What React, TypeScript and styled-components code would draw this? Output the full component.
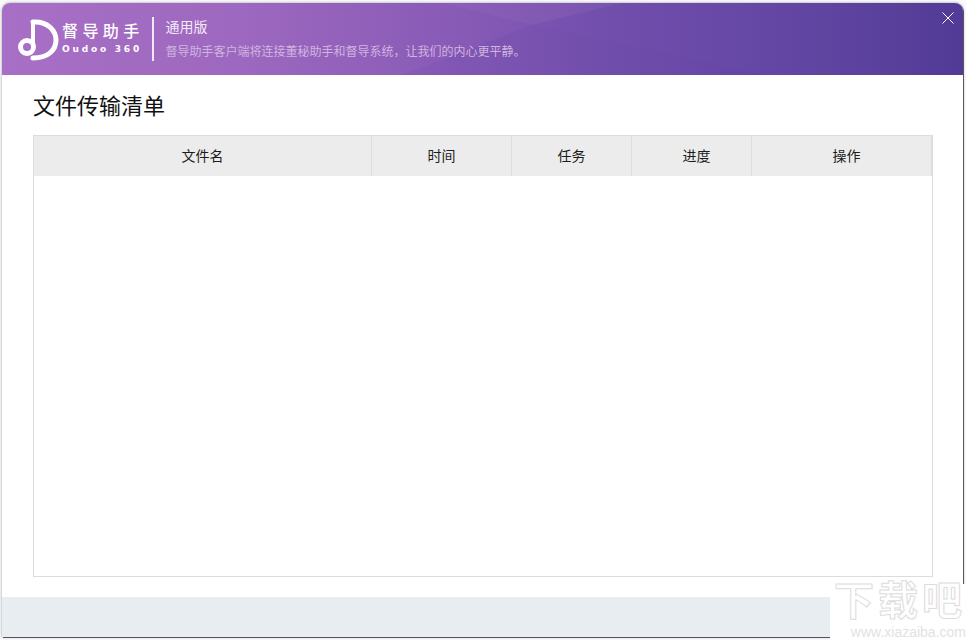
import { createGlobalStyle } from "styled-components";
import styled from "styled-components";

const GlobalStyle = createGlobalStyle`
    html, body {
        margin: 0;
        padding: 0;
        height: 640px;
        overflow: hidden;
        background: #fafafb;
        font-family: "Noto Sans CJK SC", "Liberation Sans", sans-serif;
    }
`;

const columns = [
    { label: "文件名", width: 338, shift: 0 },
    { label: "时间", width: 140, shift: 0 },
    { label: "任务", width: 120, shift: 0 },
    { label: "进度", width: 120, shift: 10 },
    { label: "操作", width: 180, shift: 10 },
];

export default function App() {
    return (
        <Page>
            <GlobalStyle />
            <Window>
                <Header>
                    <HeaderArt viewBox="0 0 961 72" preserveAspectRatio="none" aria-hidden="true">
                        <polygon points="440,0 620,0 530,22" fill="#ffffff" opacity="0.03" />
                        <polygon points="530,22 760,72 400,72" fill="#3d2a90" opacity="0.07" />
                        <polygon points="620,0 961,0 961,72 760,72 530,22" fill="#3d2a90" opacity="0.04" />
                    </HeaderArt>
                    <Brand>
                        <LogoMark viewBox="0 0 42 44" aria-hidden="true">
                            <path d="M15 4 C30 3 38 13 38 22 C38 33 29 40 15 40" fill="none" stroke="#fff" strokeWidth="5" strokeLinecap="round" />
                            <path d="M15 4 V30" fill="none" stroke="#fff" strokeWidth="4" />
                            <circle cx="9" cy="29" r="6.5" fill="none" stroke="#fff" strokeWidth="5" />
                        </LogoMark>
                        <BrandText>
                            <BrandName>督导助手</BrandName>
                            <BrandLatin>Oudoo 360</BrandLatin>
                        </BrandText>
                    </Brand>
                    <Divider />
                    <Intro>
                        <Edition>通用版</Edition>
                        <Slogan>督导助手客户端将连接董秘助手和督导系统，让我们的内心更平静。</Slogan>
                    </Intro>
                    <CloseIcon viewBox="0 0 12 12" aria-label="关闭">
                        <path d="M0.5 0.5 L11.5 11.5 M11.5 0.5 L0.5 11.5" stroke="#fff" strokeWidth="1" fill="none" />
                    </CloseIcon>
                </Header>
                <Main>
                    <Title>文件传输清单</Title>
                    <Table>
                        <TableHead>
                            {columns.map((col) => (
                                <HeadCell key={col.label} $width={col.width} $shift={col.shift}>{col.label}</HeadCell>
                            ))}
                        </TableHead>
                    </Table>
                </Main>
                <Footer />
            </Window>
            <Watermark>
                <WatermarkName>下载吧</WatermarkName>
                <WatermarkUrl>www.xiazaiba.com</WatermarkUrl>
            </Watermark>
        </Page>
    );
}

const Page = styled.div`
    width: 966px;
    height: 640px;
    padding: 3px 3px 3px 2px;
    box-sizing: border-box;
    position: relative;
    overflow: hidden;
`;

const Window = styled.div`
    width: 961px;
    height: 634px;
    display: flex;
    flex-direction: column;
    background: #fff;
    border-radius: 8px 8px 0 0;
    box-shadow: 1px 1px 0 #55555a, 0 0 3px #9a9a9e;
    overflow: hidden;
`;

const Header = styled.div`
    height: 72px;
    flex-shrink: 0;
    display: flex;
    align-items: center;
    position: relative;
    color: #fff;
    background: linear-gradient(90deg, #a86fc6 0%, #9d68bf 25%, #8a5cb7 45%, #7651ae 62%, #6b4aa8 75%, #5f44a0 88%, #533c96 100%);
`;

const HeaderArt = styled.svg`
    position: absolute;
    inset: 0;
    width: 100%;
    height: 100%;
`;

const Brand = styled.div`
    display: flex;
    align-items: center;
    margin-left: 16px;
    position: relative;
`;

const LogoMark = styled.svg`
    width: 42px;
    height: 44px;
    margin-top: 1px;
`;

const BrandText = styled.div`
    margin-left: 2px;
    display: flex;
    flex-direction: column;
    align-items: flex-start;
`;

const BrandName = styled.div`
    font-size: 16px;
    line-height: 20px;
    letter-spacing: 4.4px;
    font-weight: 500;
    white-space: nowrap;
    margin-top: -3px;
`;

const BrandLatin = styled.div`
    margin-top: 3px;
    font-family: "DejaVu Sans", sans-serif;
    font-size: 9px;
    line-height: 12px;
    font-weight: 700;
    letter-spacing: 2.8px;
    white-space: nowrap;
`;

const Divider = styled.div`
    width: 2px;
    height: 44px;
    margin-left: 8px;
    background: #f1e6f6;
    position: relative;
`;

const Intro = styled.div`
    margin-left: 12px;
    display: flex;
    flex-direction: column;
    gap: 8px;
    position: relative;
    top: -1px;
`;

const Edition = styled.div`
    font-size: 14px;
    line-height: 18px;
    color: #f3e9f7;
`;

const Slogan = styled.div`
    font-size: 12px;
    line-height: 16px;
    color: #d0b4e0;
    white-space: nowrap;
`;

const CloseIcon = styled.svg`
    position: absolute;
    top: 9px;
    right: 9px;
    width: 12px;
    height: 12px;
`;

const Main = styled.div`
    flex: 1;
    padding: 15px 30px 20px 31px;
    display: flex;
    flex-direction: column;
    min-height: 0;
`;

const Title = styled.h1`
    margin: 0 0 16px;
    font-size: 22px;
    line-height: 29px;
    font-weight: 400;
    color: #111;
`;

const Table = styled.div`
    flex: 1;
    border: 1px solid #dcdcdc;
`;

const TableHead = styled.div`
    display: flex;
    height: 40px;
    background: #ececec;
`;

const HeadCell = styled.div<{ $width: number; $shift: number }>`
    width: ${(p) => p.$width}px;
    flex-shrink: 0;
    box-sizing: border-box;
    padding: 0 0 3px ${(p) => p.$shift}px;
    display: flex;
    align-items: center;
    justify-content: center;
    font-size: 14px;
    color: #1c1c1c;
    border-right: 1px solid #dedede;
`;

const Footer = styled.div`
    height: 40px;
    flex-shrink: 0;
    background: #e8edf1;
`;

const Watermark = styled.div`
    position: absolute;
    right: 0;
    bottom: 0;
    width: 136px;
    height: 56px;
    background: #fff;
    display: flex;
    flex-direction: column;
    align-items: flex-end;
    color: #fff;
`;

const WatermarkName = styled.div`
    font-family: "Liberation Sans", "Noto Sans CJK SC", sans-serif;
    font-size: 40px;
    line-height: 42px;
    height: 42px;
    margin-top: -4px;
    letter-spacing: 4px;
    font-weight: 700;
    white-space: nowrap;
    -webkit-text-stroke: 1px #dcdcdc;
`;

const WatermarkUrl = styled.div`
    font-family: "Liberation Sans", sans-serif;
    font-size: 14px;
    line-height: 15px;
    height: 15px;
    margin-top: 3px;
    white-space: nowrap;
    color: #e2e2e2;
`;
